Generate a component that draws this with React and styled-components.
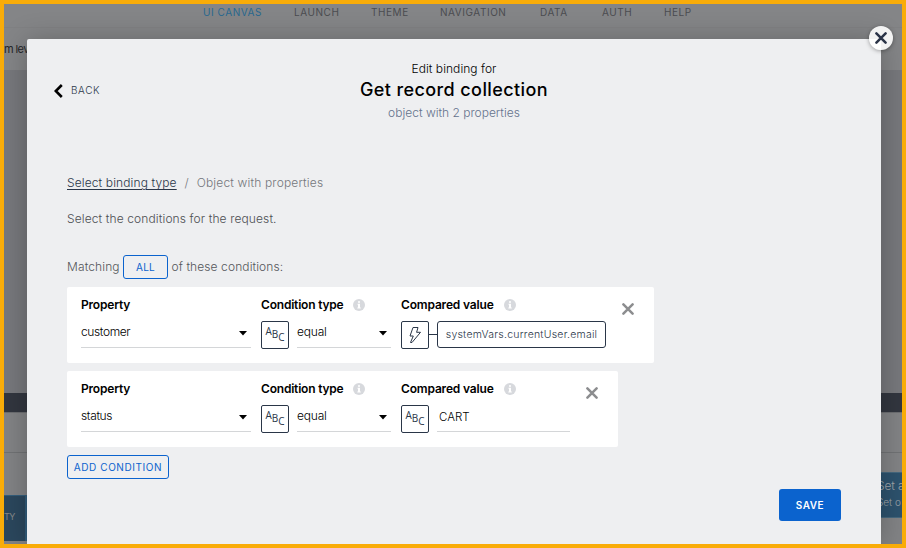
import React from "react";
import styled, { createGlobalStyle } from "styled-components";

const Global = createGlobalStyle`
  * { box-sizing: border-box; }
  html, body { margin: 0; padding: 0; overflow: hidden; }
  body { font-family: "Inter", "Open Sans", sans-serif; }
  button, input { font-family: inherit; margin: 0; padding: 0; background: none; border: 0; }
`;

const Frame = styled.div`
  position: relative;
  width: 906px;
  height: 548px;
  border: 4px solid #f9ac08;
  overflow: hidden;
`;

const Text = styled.span`
  font-size: ${(p) => p.$size || 12}px;
  font-weight: ${(p) => p.$weight || 300};
  letter-spacing: ${(p) => p.$track || 0}px;
  line-height: ${(p) => p.$line || 16}px;
  color: ${(p) => p.$color || "#000"};
  white-space: nowrap;
`;

/* Dimmed editor behind the dialog */
const Editor = styled.div`
  display: flex;
  flex-direction: column;
  height: 540px;
  background: #848587;
`;
const Nav = styled.nav`
  display: flex;
  height: 24px;
  padding-left: 199px;
  border-bottom: 1px solid #808183;
`;
const NavItem = styled.div`
  display: flex;
  width: ${(p) => p.$width}px;
`;
const SubBar = styled.div`
  display: flex;
  height: 42px;
  padding-top: 13px;
  overflow: hidden;
`;
const Canvas = styled.div`
  height: 323px;
  background: #77787c;
`;
const LogicBar = styled.div`
  height: 19px;
  background: #32363f;
`;
const LogicTabs = styled.div`
  height: 41px;
  background: #828385;
  border-top: 1px solid #6c6e71;
  border-bottom: 1px solid #707274;
`;
const LogicArea = styled.div`
  flex: 1;
  display: flex;
  justify-content: space-between;
  background: #828385;
`;
const LeftNode = styled.div`
  display: flex;
  width: 23px;
  height: 46px;
  margin-top: 42px;
  padding-top: 13px;
  background: linear-gradient(90deg, #2b475d 0 21px, #315c7b 21px);
  border-top: 1px solid #345e7b;
  overflow: hidden;
`;
const RightNode = styled.div`
  display: flex;
  flex-direction: column;
  width: 25px;
  height: 46px;
  margin-top: 19px;
  padding-top: 5px;
  background: #2d526d;
  border: solid #46687e;
  border-width: 1px 0;
  overflow: hidden;
`;

/* Dialog */
const Dialog = styled.section`
  position: absolute;
  left: 23px;
  top: 35px;
  width: 854px;
  height: 505px;
  display: flex;
  flex-direction: column;
  background: #eeeff1;
  border-radius: 2px 2px 0 0;
  box-shadow: 0 2px 28px rgba(0, 0, 0, 0.26);
`;
const CloseButton = styled.button`
  position: absolute;
  right: -12px;
  top: -13px;
  width: 24px;
  height: 24px;
  display: grid;
  place-items: center;
  border-radius: 50%;
  background: rgba(255, 255, 255, 0.9);
  box-shadow: 0 1px 4px rgba(0, 0, 0, 0.35);
`;
const Header = styled.header`
  display: grid;
  grid-template-columns: 200px 1fr 200px;
  height: 136px;
  padding-top: 22px;
`;
const Back = styled.button`
  display: flex;
  align-items: flex-start;
  gap: 8px;
  height: 40px;
  padding: 20px 0 0 27px;
`;
const BackIcon = styled.svg`
  margin-top: 3px;
`;
const Titles = styled.div`
  display: flex;
  flex-direction: column;
  align-items: center;
`;
const Content = styled.main`
  display: flex;
  flex-direction: column;
  align-items: flex-start;
  padding-left: 40px;
`;
const Crumbs = styled.div`
  display: flex;
  height: 36px;
`;
const CrumbLink = styled(Text).attrs({ as: "a" })`
  text-decoration: underline;
  text-decoration-thickness: 1px;
  text-underline-offset: 2px;
`;
const Slash = styled(Text)`
  width: 20px;
  text-align: center;
`;
const Intro = styled.div`
  height: 44px;
  display: flex;
`;
const Matching = styled.div`
  display: flex;
  align-items: center;
  height: 24px;
  margin-bottom: 8px;
`;
const Outlined = styled.button`
  width: ${(p) => p.$width}px;
  height: 24px;
  display: flex;
  align-items: center;
  justify-content: center;
  border: 1px solid #0b63ce;
  border-radius: 3px;
`;
const MatchWord = styled.div`
  width: ${(p) => p.$width}px;
  display: flex;
`;
const Card = styled.article`
  display: flex;
  gap: 10px;
  height: 76px;
  margin-bottom: 8px;
  padding: 10px 20px 0 14px;
  background: #fff;
  border-radius: 2px;
`;
const Field = styled.div`
  width: ${(p) => p.$width}px;
`;
const Label = styled.div`
  display: flex;
  align-items: center;
  justify-content: space-between;
  width: ${(p) => p.$width}px;
  height: 16px;
  margin-bottom: 8px;
`;
const Controls = styled.div`
  display: flex;
  height: 28px;
`;
const TypeBox = styled.div`
  width: 28px;
  height: 28px;
  flex: none;
  display: grid;
  place-items: center;
  border: 1px solid #2a3648;
  border-radius: 2px;
`;
const Letters = styled.div`
  display: flex;
  margin-top: -2px;
  font-family: "Open Sans", sans-serif;
  font-size: 10px;
  line-height: 10px;
  color: #2a3648;
`;
const Letter = styled.span`
  padding-top: ${(p) => p.$drop}px;
`;
const Select = styled.div`
  flex: 1;
  display: flex;
  justify-content: space-between;
  height: 27px;
  margin-left: ${(p) => p.$inset || 0}px;
  padding: ${(p) => (p.$pad ? "4px 0 0 2px" : "3px 4px 0 0")};
  border-bottom: 1px solid #d4d6d8;
`;
const Caret = styled.svg`
  margin-top: 7px;
`;
const Connector = styled.div`
  width: 8px;
  height: 1px;
  margin-top: 13px;
  background: #2a3648;
`;
const Formula = styled.div`
  width: 169px;
  height: 27px;
  display: grid;
  place-items: center;
  border: 1px solid #2a3648;
  border-radius: 3px;
`;
const Remove = styled.button`
  width: 12px;
  height: 12px;
  margin: 6px 0 0 6px;
  display: flex;
`;
const Footer = styled.footer`
  display: flex;
  justify-content: flex-end;
  padding: 10px 40px 0 0;
`;
const Save = styled.button`
  display: flex;
  align-items: center;
  justify-content: center;
  width: 62px;
  height: 32px;
  background: #0b63ce;
  border-radius: 3px;
`;

const Cross = ({ size, color, width }) => (
  <svg width={size} height={size} viewBox="0 0 12 12" fill="none" stroke={color} strokeWidth={width} strokeLinecap="round">
    <path d="M1.4 1.4 10.6 10.6M10.6 1.4 1.4 10.6" />
  </svg>
);

const Info = () => (
  <svg width="12" height="12" viewBox="0 0 12 12">
    <circle cx="6" cy="6" r="6" fill="#d7d9dd" />
    <path d="M5 2.2h2v1.6H5zM4.5 4.8H7v3.8h.8v1H4.3v-1H5V5.8h-.5z" fill="#fff" />
  </svg>
);

const Arrow = () => (
  <Caret width="8" height="5" viewBox="0 0 8 5">
    <path d="M0 0h8L4 4.5z" fill="#000" />
  </Caret>
);

const TextType = () => (
  <TypeBox>
    <Letters>
      <Letter $drop={0}>A</Letter>
      <Letter $drop={3}>B</Letter>
      <Letter $drop={6}>C</Letter>
    </Letters>
  </TypeBox>
);

const FormulaType = () => (
  <TypeBox>
    <svg width="14" height="18" viewBox="0 0 14 18" fill="none" stroke="#2a3648" strokeWidth="1" strokeLinejoin="round">
      <path d="M5 1.5h5L8.6 6.3h3.9L4 16.5H2.5L5.3 10H2z" />
    </svg>
  </TypeBox>
);

const Condition = ({ property, track, formula, value }) => (
  <Card>
    <Field $width={170}>
      <Label><Text $weight={600} $track={-0.2}>Property</Text></Label>
      <Controls>
        <Select><Text $track={track}>{property}</Text><Arrow /></Select>
      </Controls>
    </Field>
    <Field $width={130}>
      <Label $width={104}><Text $weight={600} $track={-0.2}>Condition type</Text><Info /></Label>
      <Controls>
        <TextType />
        <Select $inset={8}><Text $track={-0.2}>equal</Text><Arrow /></Select>
      </Controls>
    </Field>
    <Field $width={formula ? 205 : 169}>
      <Label $width={115}><Text $weight={600} $track={-0.17}>Compared value</Text><Info /></Label>
      <Controls>
        {formula ? (
          <>
            <FormulaType />
            <Connector />
            <Formula><Text $size={10.5} $track={0.23} $weight={350} $color="#2a3648">{formula}</Text></Formula>
          </>
        ) : (
          <>
            <TextType />
            <Select $inset={8} $pad><Text $size={11.5}>{value}</Text></Select>
          </>
        )}
      </Controls>
    </Field>
    <Remove aria-label="Remove condition"><Cross size={12} color="#8c8d8f" width={2.5} /></Remove>
  </Card>
);

const navItems = [
  ["UI CANVAS", 91, "#28688f"],
  ["LAUNCH", 77],
  ["THEME", 69],
  ["NAVIGATION", 100],
  ["DATA", 62],
  ["AUTH", 62],
  ["HELP", 40],
];

export default function App() {
  return (
    <Frame>
      <Global />
      <Editor>
        <Nav>
          {navItems.map(([name, width, color = "#4b4c50"]) => (
            <NavItem key={name} $width={width}>
              <Text $size={10} $weight={400} $color={color} $track={0.55}>{name}</Text>
            </NavItem>
          ))}
        </Nav>
        <SubBar><Text $size={11} $weight={400} $track={-0.6} $color="#252629">m level</Text></SubBar>
        <Canvas />
        <LogicBar />
        <LogicTabs />
        <LogicArea>
          <LeftNode><Text $size={9} $weight={400} $track={-0.8} $color="#858789">TY</Text></LeftNode>
          <RightNode>
            <Text $size={12} $track={-0.1} $color="#a0a6ab">Set a</Text>
            <Text $size={10} $color="#a0a6ab">Set o</Text>
          </RightNode>
        </LogicArea>
      </Editor>
      <Dialog>
        <Header>
          <Back>
            <BackIcon width="9" height="14" viewBox="0 0 9 14" fill="none" stroke="#000" strokeWidth="2.6">
              <path d="M7.8 1 1.8 7l6 6" />
            </BackIcon>
            <Text $size={10} $track={0.6} $line={18} $color="#2a3648">BACK</Text>
          </Back>
          <Titles>
            <Text $track={0.05}>Edit binding for</Text>
            <Text $size={18} $line={25} $weight={550} $track={0.4}>Get record collection</Text>
            <Text $line={22} $color="#64728c">object with 2 properties</Text>
          </Titles>
        </Header>
        <Content>
          <Crumbs>
            <CrumbLink $color="#2a3648" $track={0.12}>Select binding type</CrumbLink>
            <Slash $color="#77797e">/</Slash>
            <Text $color="#74767b" $track={0.16}>Object with properties</Text>
          </Crumbs>
          <Intro><Text $color="#4c4e52" $track={0.12}>Select the conditions for the request.</Text></Intro>
          <Matching>
            <MatchWord $width={56}><Text $color="#54565a" $track={0.12}>Matching</Text></MatchWord>
            <Outlined $width={45}><Text $size={10} $weight={400} $track={0.3} $color="#0b63ce">ALL</Text></Outlined>
            <MatchWord $width={130}>
              <Text $color="#54565a" $track={0.1}>&nbsp;of these conditions:</Text>
            </MatchWord>
          </Matching>
          <Condition property="customer" track={-0.38} formula="systemVars.currentUser.email" />
          <Condition property="status" track={-0.35} value="CART" />
          <Outlined $width={102}><Text $size={10} $weight={400} $track={0.58} $color="#0b63ce">ADD CONDITION</Text></Outlined>
        </Content>
        <Footer>
          <Save><Text $size={10} $weight={600} $track={0.5} $color="#fff">SAVE</Text></Save>
        </Footer>
        <CloseButton aria-label="Close"><Cross size={12} color="#2a3347" width={2.5} /></CloseButton>
      </Dialog>
    </Frame>
  );
}
